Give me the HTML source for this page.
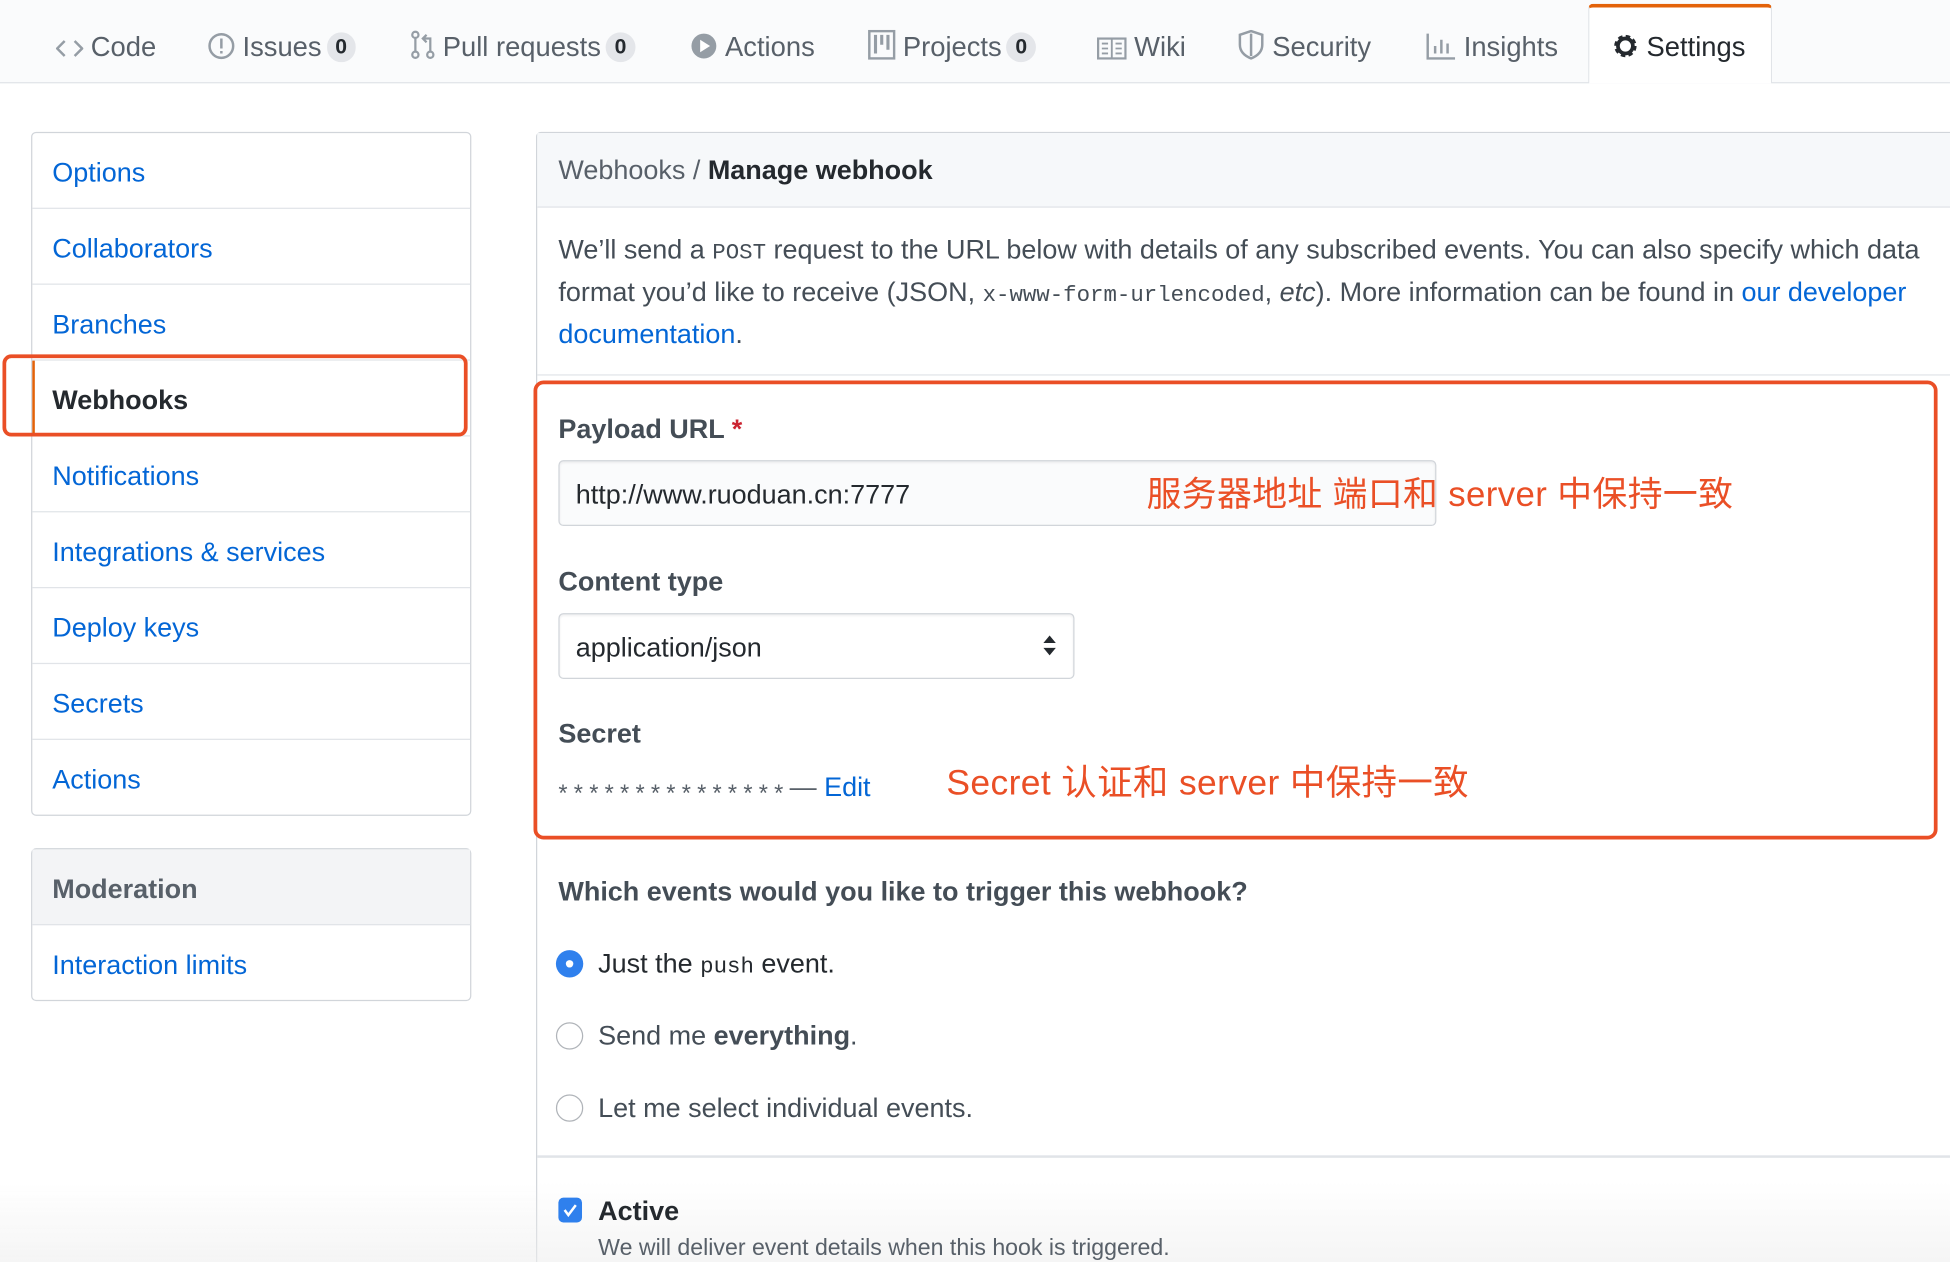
<!DOCTYPE html>
<html><head><meta charset="utf-8"><style>
html,body{margin:0;padding:0;width:1950px;height:1262px;overflow:hidden;background:#fff}
#w{position:absolute;left:0;top:0;width:1568px;height:1015px;transform:scale(1.24362);transform-origin:0 0;font-family:"Liberation Sans","Noto Sans CJK SC",sans-serif;color:#24292e;overflow:hidden}
.a{position:absolute;white-space:nowrap}
.nav{position:absolute;left:0;top:0;width:1568px;height:66px;background:#fafbfc;border-bottom:1px solid #e1e4e8}
.tab{position:absolute;top:23px;font-size:22px;color:#586069;line-height:30px}
.cnt{display:inline-block;background:#e4e6ea;border-radius:12px;font-size:17px;padding:0 7px;color:#24292e;font-weight:bold;line-height:24px;vertical-align:2px;margin-left:4px}
.ico{display:inline-block;vertical-align:-3px;margin-right:6px}
.side{position:absolute;left:25px;width:352px;border:1px solid #d1d5da;border-radius:4px;background:#fff}
.it{height:60px;border-bottom:1px solid #e1e4e8;font-size:21.7px;color:#0366d6;line-height:64px;padding-left:16px;position:relative}
.it:last-child{border-bottom:none}
.lbl{font-size:21.7px;font-weight:bold;color:#444d56}
.txt{font-size:21.7px;color:#444d56}
.red{color:#ea4f26}
a{color:#0366d6;text-decoration:none}
code{font-family:"Liberation Mono",monospace;font-size:18px;line-height:0}
</style></head><body><div id="w">
<div class="nav"></div>
<div class="tab" style="left:45px"><svg class="ico" width="22" height="18" viewBox="0 0 22 18"><path d="M7 3L1 9l6 6M15 3l6 6-6 6" fill="none" stroke="#959da5" stroke-width="2"/></svg>Code</div>
<div class="tab" style="left:167px"><svg class="ico" width="22" height="22" viewBox="0 0 22 22"><circle cx="11" cy="11" r="9.5" fill="none" stroke="#959da5" stroke-width="2"/><path d="M11 5v8M11 15v2" stroke="#959da5" stroke-width="2"/></svg>Issues<span class="cnt">0</span></div>
<div class="tab" style="left:330px"><svg class="ico" width="20" height="24" viewBox="0 0 20 24"><circle cx="4" cy="4" r="2.5" fill="none" stroke="#959da5" stroke-width="1.8"/><circle cx="4" cy="20" r="2.5" fill="none" stroke="#959da5" stroke-width="1.8"/><circle cx="16" cy="20" r="2.5" fill="none" stroke="#959da5" stroke-width="1.8"/><path d="M4 7v10M16 17V7h-5M13 4l-3 3 3 3" fill="none" stroke="#959da5" stroke-width="1.8"/></svg>Pull requests<span class="cnt">0</span></div>
<div class="tab" style="left:555px"><svg class="ico" width="22" height="22" viewBox="0 0 22 22"><circle cx="11" cy="11" r="10" fill="#959da5"/><path d="M8 6l8 5-8 5z" fill="#fff"/></svg>Actions</div>
<div class="tab" style="left:698px"><svg class="ico" width="22" height="24" viewBox="0 0 22 24"><rect x="1" y="1" width="20" height="22" fill="none" stroke="#959da5" stroke-width="2"/><path d="M6 4v15M11 4v8M16 4v12" stroke="#959da5" stroke-width="2.5"/></svg>Projects<span class="cnt">0</span></div>
<div class="tab" style="left:882px"><svg class="ico" width="24" height="18" viewBox="0 0 24 18"><rect x="1" y="1" width="22" height="16" fill="none" stroke="#959da5" stroke-width="1.8"/><path d="M12 1v16M4 5h5M4 9h5M4 13h5M15 5h5M15 9h5M15 13h5" stroke="#959da5" stroke-width="1.5"/></svg>Wiki</div>
<div class="tab" style="left:995px"><svg class="ico" width="22" height="24" viewBox="0 0 22 24"><path d="M11 1L2 4v8c0 6 4 9 9 11 5-2 9-5 9-11V4z" fill="none" stroke="#959da5" stroke-width="2"/><path d="M11 3v18" stroke="#959da5" stroke-width="2"/></svg>Security</div>
<div class="tab" style="left:1147px"><svg class="ico" width="24" height="22" viewBox="0 0 24 22"><path d="M1 1v20h22M7 17V11M12 17V6M17 17V9" fill="none" stroke="#959da5" stroke-width="2"/></svg>Insights</div>
<div style="position:absolute;left:1277px;top:3px;width:148px;height:64px;background:#fff;border:1px solid #e1e4e8;border-top:3px solid #e36209;border-bottom:none;border-radius:4px 4px 0 0;box-sizing:border-box"></div>
<div class="tab" style="left:1296px;color:#24292e"><svg class="ico" width="22" height="22" viewBox="0 0 22 22"><circle cx="11" cy="11" r="7" fill="none" stroke="#24292e" stroke-width="4" stroke-dasharray="3.2 2.3"/><circle cx="11" cy="11" r="6" fill="none" stroke="#24292e" stroke-width="3"/></svg>Settings</div>

<div class="side" style="top:106px">
<div class="it">Options</div><div class="it">Collaborators</div><div class="it">Branches</div>
<div class="it" style="color:#24292e;font-weight:bold"><div style="position:absolute;left:0;top:0;bottom:0;width:2px;background:#e36209"></div>Webhooks</div>
<div class="it">Notifications</div><div class="it">Integrations &amp; services</div><div class="it">Deploy keys</div><div class="it">Secrets</div><div class="it">Actions</div>
</div>
<div class="side" style="top:682px">
<div class="it" style="background:#f3f4f6;color:#586069;font-weight:bold">Moderation</div>
<div class="it">Interaction limits</div>
</div>
<div class="a" style="left:2px;top:285px;width:368px;height:60px;border:3px solid #ea4f26;border-radius:7px"></div>

<div class="a" style="left:431px;top:106px;width:1200px;height:920px;border:1px solid #d1d5da;border-radius:4px;background:#fff"></div>
<div class="a" style="left:432px;top:107px;width:1200px;height:59px;background:#f6f8fa;border-bottom:1px solid #e1e4e8"></div>
<div class="a" style="left:449px;top:123px;font-size:21.7px;line-height:28px;color:#586069">Webhooks / <b style="color:#24292e">Manage webhook</b></div>
<div class="a txt" style="left:449px;top:184px;line-height:34px">We’ll send a <code>POST</code> request to the URL below with details of any subscribed events. You can also specify which data<br>format you’d like to receive (JSON, <code>x-www-form-urlencoded</code>, <i>etc</i>). More information can be found in <a>our developer</a><br><a>documentation</a>.</div>
<div class="a" style="left:432px;top:301px;width:1200px;height:1px;background:#e1e4e8"></div>

<div class="a lbl" style="left:449px;top:332px">Payload URL <span style="color:#cb2431">*</span></div>
<div class="a" style="left:449px;top:370px;width:706px;height:53px;box-sizing:border-box;border:1px solid #d1d5da;border-radius:4px;background:#fafbfc;box-shadow:inset 0 1px 2px rgba(27,31,35,.08)"></div>
<div class="a" style="left:463px;top:385px;font-size:21.7px;color:#24292e">http://www.ruoduan.cn:7777</div>
<div class="a red" style="left:922px;top:376px;font-size:28px;letter-spacing:0.3px">服务器地址 端口和 server 中保持一致</div>

<div class="a lbl" style="left:449px;top:455px">Content type</div>
<div class="a" style="left:449px;top:493px;width:415px;height:53px;box-sizing:border-box;border:1px solid #d1d5da;border-radius:4px;background:#fff;box-shadow:inset 0 1px 2px rgba(27,31,35,.08)"></div>
<div class="a" style="left:463px;top:508px;font-size:21.7px;color:#24292e">application/json</div>
<svg class="a" style="left:838px;top:510px" width="12" height="18" viewBox="0 0 12 18"><path d="M6 1l5 6H1zM6 17l5-6H1z" fill="#24292e"/></svg>

<div class="a lbl" style="left:449px;top:577px">Secret</div>
<div class="a" style="left:449px;top:620px;font-size:21.7px;color:#586069"><span style="font-size:19px;letter-spacing:5px;position:relative;top:4px">***************</span>— <a>Edit</a></div>
<div class="a red" style="left:761px;top:607px;font-size:28.5px;letter-spacing:0.3px">Secret 认证和 server 中保持一致</div>
<div class="a" style="left:429px;top:306px;width:1123px;height:363px;border:3px solid #ea4f26;border-radius:8px"></div>

<div class="a lbl" style="left:449px;top:704px">Which events would you like to trigger this webhook?</div>
<div class="a" style="left:447px;top:764px;width:22px;height:22px;border-radius:50%;background:#2f80ed;box-sizing:border-box"><div style="position:absolute;left:8px;top:8px;width:6px;height:6px;border-radius:50%;background:#fff"></div></div>
<div class="a txt" style="left:481px;top:762px;color:#24292e">Just the <code>push</code> event.</div>
<div class="a" style="left:447px;top:822px;width:22px;height:22px;border-radius:50%;border:1px solid #b0b4b9;box-sizing:border-box;background:#fff"></div>
<div class="a txt" style="left:481px;top:820px">Send me <b>everything</b>.</div>
<div class="a" style="left:447px;top:880px;width:22px;height:22px;border-radius:50%;border:1px solid #b0b4b9;box-sizing:border-box;background:#fff"></div>
<div class="a txt" style="left:481px;top:878px">Let me select individual events.</div>
<div class="a" style="left:432px;top:929px;width:1200px;height:2px;background:#e1e4e8"></div>
<div class="a" style="left:0;top:950px;width:1568px;height:65px;background:linear-gradient(to bottom,rgba(240,240,240,0),rgba(238,238,238,.6))"></div>
<div class="a" style="left:449px;top:963px;width:19px;height:20px;border-radius:4px;background:#2f80ed"><svg width="19" height="20" viewBox="0 0 19 20"><path d="M5 10l3 4 6-8" fill="none" stroke="#fff" stroke-width="2"/></svg></div>
<div class="a lbl" style="left:481px;top:961px;color:#24292e">Active</div>
<div class="a" style="left:481px;top:992px;font-size:18.6px;color:#586069">We will deliver event details when this hook is triggered.</div>
</div></body></html>
